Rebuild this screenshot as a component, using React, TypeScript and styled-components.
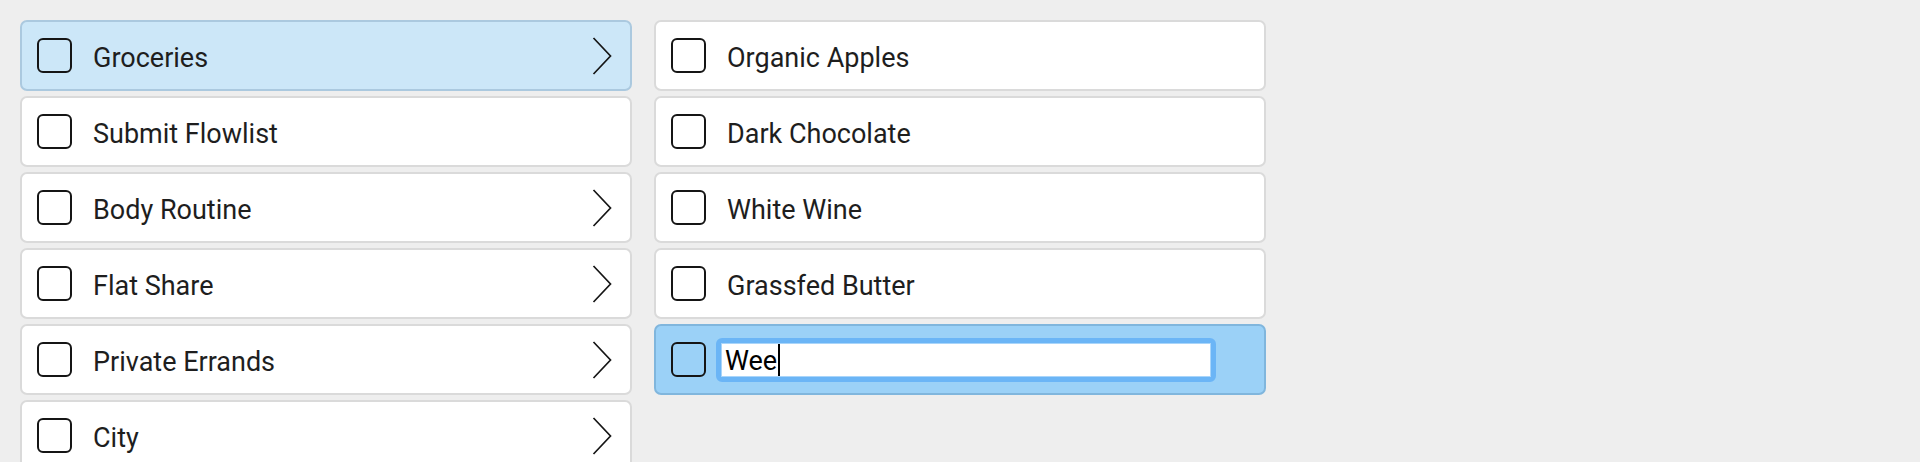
import React from "react";
import styled, { createGlobalStyle } from "styled-components";

const Global = createGlobalStyle`
  html, body {
    margin: 0;
    padding: 0;
    background: #eeeeee;
  }
  body {
    font-family: Roboto, "Noto Sans", sans-serif;
  }
`;

const Page = styled.div`
  display: grid;
  grid-template-columns: 612px 612px;
  column-gap: 22px;
  align-items: start;
  padding: 20px 0 0 20px;
  height: 462px;
  box-sizing: border-box;
  overflow: hidden;
`;

const Column = styled.div`
  display: flex;
  flex-direction: column;
  gap: 5px;
`;

type Variant = "plain" | "selected" | "editing";

const cardBg: Record<Variant, string> = {
  plain: "#ffffff",
  selected: "#cce7f8",
  editing: "#9bd1f7",
};
const cardBorder: Record<Variant, string> = {
  plain: "#dadada",
  selected: "#abc9df",
  editing: "#80b6dd",
};

const Card = styled.div<{ $variant: Variant }>`
  box-sizing: border-box;
  height: 71px;
  display: flex;
  align-items: center;
  padding: 0 18px 0 15px;
  background: ${(p) => cardBg[p.$variant]};
  border: 2px solid ${(p) => cardBorder[p.$variant]};
  border-radius: 7px;
`;

const Check = styled.span`
  box-sizing: border-box;
  flex: none;
  width: 35px;
  height: 35px;
  border: 2px solid #151515;
  border-radius: 6px;
`;

const Label = styled.span`
  flex: 1;
  margin-left: 21px;
  padding-top: 5px;
  font-size: 27px;
  color: #1e1e1e;
  white-space: nowrap;
`;

const Chevron = styled.svg`
  flex: none;
  width: 20px;
  height: 38px;
`;

const Field = styled.div`
  box-sizing: border-box;
  margin-left: 10px;
  width: 500px;
  height: 44px;
  border: 5px solid #6bb5f6;
  border-radius: 6px;
  background: #6bb5f6;
  display: flex;
`;

const FieldInner = styled.div`
  flex: 1;
  box-sizing: border-box;
  background: #ffffff;
  border: 1px solid #a9d5fa;
  display: flex;
  align-items: center;
  padding-left: 3px;
  padding-top: 2px;
  font-size: 27px;
  color: #000;
  font-family: Roboto, Arial, sans-serif;
`;

const Caret = styled.span`
  display: inline-block;
  width: 2px;
  height: 32px;
  background: #000;
  margin-left: 1px;
  margin-top: -2px;
`;

const ChevronIcon = () => (
  <Chevron viewBox="0 0 20 38">
    <polyline
      points="1.5,1 18.5,19 1.5,37"
      fill="none"
      stroke="#151515"
      strokeWidth="1.7"
    />
  </Chevron>
);

const left = [
  { label: "Groceries", sub: true, variant: "selected" as Variant },
  { label: "Submit Flowlist", sub: false, variant: "plain" as Variant },
  { label: "Body Routine", sub: true, variant: "plain" as Variant },
  { label: "Flat Share", sub: true, variant: "plain" as Variant },
  { label: "Private Errands", sub: true, variant: "plain" as Variant },
  { label: "City", sub: true, variant: "plain" as Variant },
];

const right = ["Organic Apples", "Dark Chocolate", "White Wine", "Grassfed Butter"];

export default function App() {
  return (
    <>
      <Global />
      <Page>
        <Column>
          {left.map((item) => (
            <Card key={item.label} $variant={item.variant}>
              <Check />
              <Label>{item.label}</Label>
              {item.sub && <ChevronIcon />}
            </Card>
          ))}
        </Column>
        <Column>
          {right.map((label) => (
            <Card key={label} $variant="plain">
              <Check />
              <Label>{label}</Label>
            </Card>
          ))}
          <Card $variant="editing">
            <Check />
            <Field>
              <FieldInner>
                <span>Wee</span>
                <Caret />
              </FieldInner>
            </Field>
          </Card>
        </Column>
      </Page>
    </>
  );
}
